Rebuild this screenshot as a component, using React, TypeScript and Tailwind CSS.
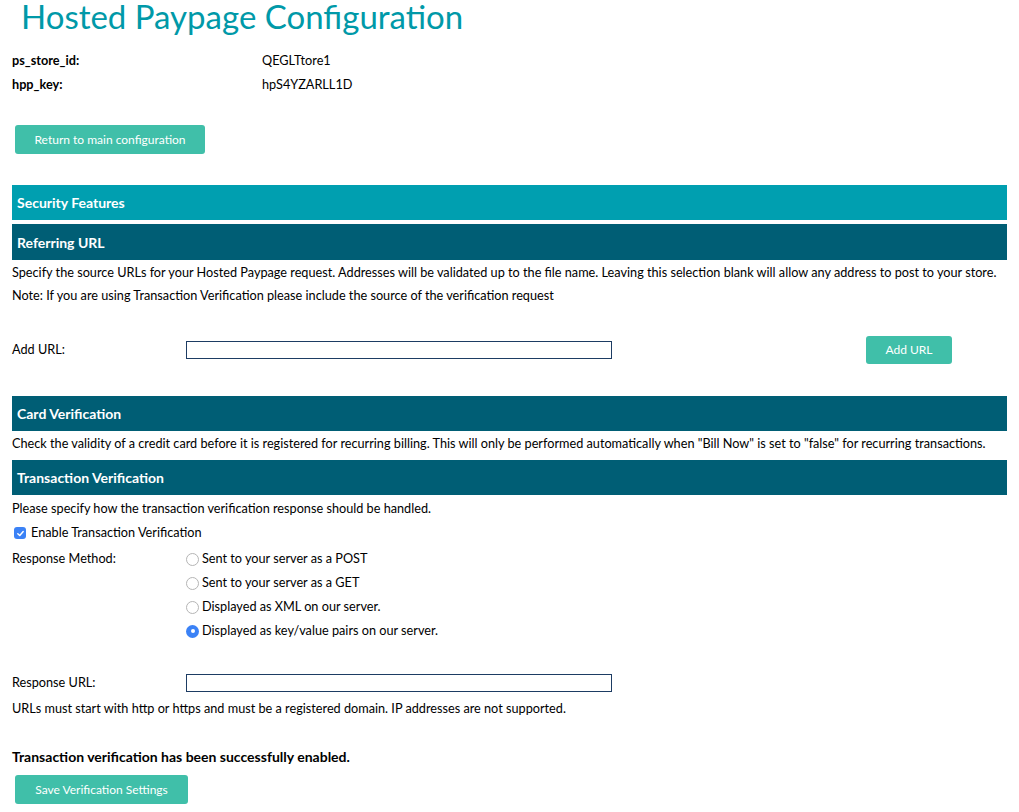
import { useState } from 'react'

const font = { fontFamily: 'Lato, "Noto Sans", sans-serif' }

function SectionBar({ title, light = false, className = '' }: { title: string; light?: boolean; className?: string }) {
  return (
    <div
      className={`h-[35px] flex items-center px-[5px] text-white font-bold text-[14px] ${
        light ? 'bg-[#009fb0]' : 'bg-[#005e75]'
      } ${className}`}
    >
      {title}
    </div>
  )
}

function Radio({ checked, label }: { checked?: boolean; label: string }) {
  return (
    <label className="flex items-center h-6 gap-[3px]">
      {checked ? (
        <span className="w-[13px] h-[13px] rounded-full bg-[#3b82f6] flex items-center justify-center">
          <span className="w-[4px] h-[4px] rounded-full bg-white" />
        </span>
      ) : (
        <span className="w-[13px] h-[13px] rounded-full border border-[#b5b5b5] bg-white" />
      )}
      <span>{label}</span>
    </label>
  )
}

export default function App() {
  const [addUrl, setAddUrl] = useState('')
  const [respUrl, setRespUrl] = useState('')

  return (
    <div className="bg-white text-black text-[12.7px] w-[1019px] h-[812px] overflow-hidden" style={font}>
      <div className="px-3">
        <h1 className="pl-[9px] text-[33px] leading-[32px] text-[#0099a8]">Hosted Paypage Configuration</h1>

        <div className="mt-[19px] grid grid-cols-[250px_1fr] gap-y-[6px] leading-[18px]">
          <div className="font-bold">ps_store_id:</div>
          <div>QEGLTtore1</div>
          <div className="font-bold">hpp_key:</div>
          <div>hpS4YZARLL1D</div>
        </div>

        <button className="mt-[32px] ml-[3px] w-[190px] h-[29px] rounded-[3px] bg-[#40bfa9] text-white text-[12px]">
          Return to main configuration
        </button>

        <SectionBar title="Security Features" light className="mt-[31px] h-[33px]" />
        <SectionBar title="Referring URL" className="mt-[4px] h-[36px]" />

        <p className="mt-[3px] leading-[18px]">
          Specify the source URLs for your Hosted Paypage request. Addresses will be validated up to the file name. Leaving this selection blank will allow any address to post to your store.
        </p>
        <p className="mt-[5px] leading-[18px]">
          Note: If you are using Transaction Verification please include the source of the verification request
        </p>

        <div className="mt-[32px] flex items-center h-[28px]">
          <span className="w-[174px]">Add URL:</span>
          <input
            value={addUrl}
            onChange={(e) => setAddUrl(e.target.value)}
            className="w-[426px] h-[18px] border border-[#1d3c63] outline-none px-1"
          />
          <button className="ml-[254px] w-[86px] h-[28px] rounded-[3px] bg-[#40bfa9] text-white text-[12px]">
            Add URL
          </button>
        </div>

        <SectionBar title="Card Verification" className="mt-[32px]" />
        <p className="mt-[3px] leading-[18px]">
          Check the validity of a credit card before it is registered for recurring billing. This will only be performed automatically when "Bill Now" is set to "false" for recurring transactions.
        </p>

        <SectionBar title="Transaction Verification" className="mt-[8px]" />
        <p className="mt-[4px] leading-[18px]">Please specify how the transaction verification response should be handled.</p>

        <label className="mt-[7px] flex items-center gap-[5px] h-[18px] pl-[2px]">
          <span className="w-[12px] h-[12px] rounded-[3px] bg-[#3b82f6] flex items-center justify-center">
            <svg width="9" height="9" viewBox="0 0 10 10" fill="none">
              <path d="M2 5.2 L4.2 7.3 L8 2.8" stroke="white" strokeWidth="1.6" strokeLinecap="round" strokeLinejoin="round" />
            </svg>
          </span>
          <span>Enable Transaction Verification</span>
        </label>

        <div className="mt-[5px] flex">
          <div className="w-[174px] h-6 flex items-center">Response Method:</div>
          <div className="flex flex-col">
            <Radio label="Sent to your server as a POST" />
            <Radio label="Sent to your server as a GET" />
            <Radio label="Displayed as XML on our server." />
            <Radio checked label="Displayed as key/value pairs on our server." />
          </div>
        </div>

        <div className="mt-[31px] flex items-center h-[18px]">
          <span className="w-[174px]">Response URL:</span>
          <input
            value={respUrl}
            onChange={(e) => setRespUrl(e.target.value)}
            className="w-[426px] h-[18px] border border-[#1d3c63] outline-none px-1"
          />
        </div>
        <p className="mt-[7px] leading-[18px]">
          URLs must start with http or https and must be a registered domain. IP addresses are not supported.
        </p>

        <p className="mt-[31px] font-bold text-[14px] leading-[18px]">Transaction verification has been successfully enabled.</p>

        <button className="mt-[9px] ml-[3px] w-[173px] h-[29px] rounded-[3px] bg-[#40bfa9] text-white text-[12px]">
          Save Verification Settings
        </button>
      </div>
    </div>
  )
}
